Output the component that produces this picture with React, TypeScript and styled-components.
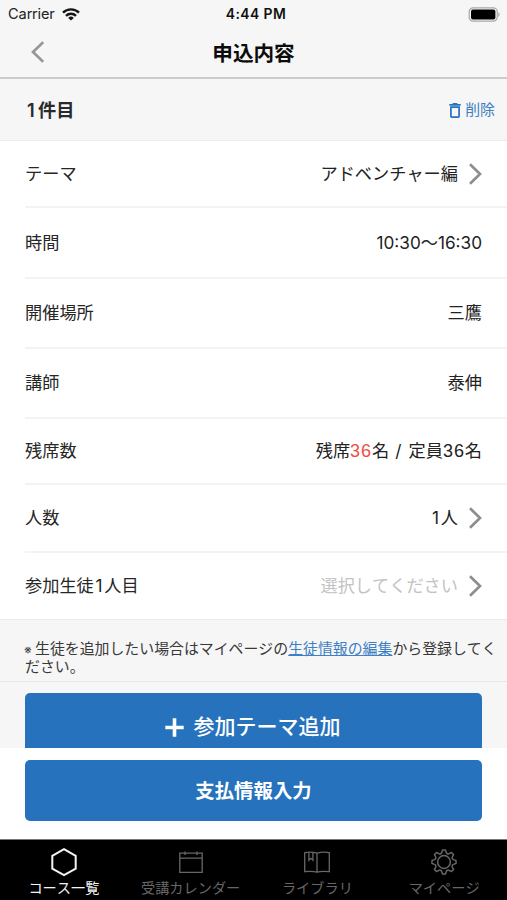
import React from 'react';
import styled, { createGlobalStyle, css } from 'styled-components';

const blue = '#2672bd';
const linkBlue = '#3d80c4';

const GlobalStyle = createGlobalStyle`
  * { box-sizing: border-box; }
  body {
    margin: 0;
    background: #fff;
    color: #222;
    font-family: Inter, "Noto Sans CJK JP", sans-serif;
    font-kerning: none;
    overflow: hidden;
  }
  button { font: inherit; border: 0; padding: 0; background: none; color: inherit; }
`;

const Screen = styled.div`
  width: 507px;
  height: 900px;
  display: flex;
  flex-direction: column;
  overflow: hidden;
  background: #fff;
`;

const StatusBar = styled.div`
  height: 27px;
  flex: none;
  display: grid;
  grid-template-columns: 1fr auto 1fr;
  align-items: center;
  padding: 1px 7px 0 8px;
  background: #f6f6f6;
  font-size: 14px;
  line-height: 26px;
  color: #222;
`;

const Carrier = styled.div`
  display: flex;
  align-items: center;
  gap: 7px;
  font-size: 14.6px;
  letter-spacing: -0.1px;
`;

const Clock = styled.div`
  font-size: 13.9px;
  font-weight: 600;
  letter-spacing: 0.4px;
  color: #111;
  padding-left: 4px;
`;

const BatterySlot = styled.div`
  display: flex;
  justify-content: flex-end;
`;

const NavBar = styled.header`
  height: 52px;
  flex: none;
  display: grid;
  grid-template-columns: 76px 1fr 76px;
  align-items: center;
  background: #f6f6f6;
  border-bottom: 2px solid #cbcbcb;
`;

const BackButton = styled.button`
  display: flex;
  padding-left: 31px;
`;

const Title = styled.h1`
  margin: 0;
  padding-top: 3px;
  text-align: center;
  font-size: 20.6px;
  line-height: 47px;
  font-weight: 700;
  color: #0c0c0c;
`;

const SectionHeader = styled.div`
  height: 62px;
  flex: none;
  display: flex;
  align-items: center;
  justify-content: space-between;
  padding: 0 12px 0 27px;
  background: #f6f6f6;
  border-bottom: 1px solid #ececec;
`;

const SectionTitle = styled.h2`
  margin: 0;
  padding-top: 1px;
  font-size: 18.2px;
  line-height: 26px;
  font-weight: 600;
  color: #2a2a2a;
`;

const SectionNumber = styled.span`
  display: inline-block;
  width: 11px;
`;

const DeleteButton = styled.button`
  display: flex;
  align-items: center;
  gap: 4px;
  padding-top: 1px;
  font-size: 14.9px;
  line-height: 22px;
  color: ${linkBlue};
`;

const Row = styled.div<{ $height: number; $last?: boolean }>`
  height: ${p => p.$height}px;
  flex: none;
  display: flex;
  align-items: center;
  justify-content: space-between;
  margin-left: 25px;
  padding-right: 25px;
  font-size: 17.2px;
  line-height: 24px;
  ${p => !p.$last && css`border-bottom: 2px solid #f3f3f3;`}
`;

const Label = styled.span`
  color: #262626;
`;

const Value = styled.span<{ $muted?: boolean }>`
  display: flex;
  align-items: center;
  gap: 11px;
  white-space: pre;
  color: ${p => (p.$muted ? '#c3c3c3' : '#222')};
`;

const Digits = styled.span<{ $red?: boolean }>`
  font-family: "Liberation Sans", Arial, sans-serif;
  font-size: 18px;
  letter-spacing: 0.9px;
  ${p => p.$red && css`color: #ef5044;`}
`;

const Slash = styled.span`
  letter-spacing: 1.2px;
`;

const One = styled.span`
  display: inline-block;
  width: 10.5px;
  text-align: center;
`;

const Note = styled.p`
  height: 63px;
  flex: none;
  margin: 0;
  padding: 21px 0 0 25px;
  background: #f6f6f6;
  border-top: 1px solid #ebebeb;
  border-bottom: 1px solid #e6e6e6;
  font-size: 14.9px;
  line-height: 17.5px;
  white-space: nowrap;
  color: #383838;
`;

const Mark = styled.span`
  display: inline-block;
  width: 10px;
  font-size: 12px;
  line-height: 10px;
  text-indent: -1px;
`;

const NoteLink = styled.a`
  color: ${linkBlue};
  text-decoration: underline;
  text-decoration-thickness: 1px;
  text-underline-offset: 1px;
`;

const AddArea = styled.div`
  height: 66px;
  flex: none;
  overflow: hidden;
  padding: 11px 25px 0;
  background: #f6f6f6;
`;

const ActionButton = styled.button<{ $size: number; $bold?: boolean }>`
  width: 100%;
  height: ${p => (p.$bold ? 61 : 68)}px;
  display: flex;
  align-items: center;
  justify-content: center;
  gap: 10px;
  padding: ${p => (p.$bold ? '1px 0 0' : '0 2px 0 0')};
  border-radius: 5px;
  background: ${blue};
  color: #fff;
  font-size: ${p => p.$size}px;
  font-weight: ${p => (p.$bold ? 700 : 500)};
  line-height: 30px;
`;

const SubmitArea = styled.div`
  height: 91px;
  flex: none;
  padding: 11.5px 25px 0;
  background: #fff;
`;

const TabBar = styled.nav`
  flex: 1;
  display: grid;
  grid-template-columns: repeat(4, 1fr);
  background: #000;
  border-top: 1px solid #777;
`;

const Tab = styled.button<{ $active?: boolean }>`
  display: flex;
  flex-direction: column;
  align-items: center;
  padding: 7px 0 0 1px;
  color: ${p => (p.$active ? '#f4f4f4' : '#676767')};
  font-size: 14.2px;
  line-height: 22px;
  white-space: nowrap;
`;

const TabIcon = styled.svg`
  width: 32px;
  height: 30px;
  display: block;
  fill: none;
  stroke: currentColor;
`;

const Chevron = ({ left }: { left?: boolean }) => (
  <svg width="13" height="22" viewBox="0 0 13 22" fill="none" stroke={left ? '#969696' : '#8e8e8e'} strokeWidth="2.7">
    <path d={left ? 'M12.2 1.2 2 11l10.2 9.8' : 'M1 1.2 11 11 1 20.8'} />
  </svg>
);

const Wifi = () => (
  <svg width="18" height="13" viewBox="0 0 18 13" fill="none" stroke="#161616" strokeWidth="2.4">
    <path d="M1 4.7a11.3 11.3 0 0 1 16 0" />
    <path d="M4 7.8a7 7 0 0 1 10 0" />
    <path d="M9 12.6 6.2 9.9a4 4 0 0 1 5.6 0Z" fill="#161616" stroke="none" />
  </svg>
);

const Battery = () => (
  <svg width="32" height="15" viewBox="0 0 32 15" fill="none">
    <rect x="1.2" y=".8" width="28" height="13.4" rx="4" stroke="#a8a8a8" strokeWidth="1.2" />
    <rect x="3" y="2.6" width="24.4" height="9.8" rx="2" fill="#000" />
    <path d="M30.3 5.2c1.7.6 1.7 4 0 4.6Z" fill="#a8a8a8" />
  </svg>
);

const Trash = () => (
  <svg width="12" height="15" viewBox="0 0 12 15" fill="none" stroke={blue} strokeWidth="1.7">
    <path d="M.3 1.9h11.4M3.7.9h4.6M1.9 4.2h8.2v9c0 .6-.3.9-.9.9H2.8c-.6 0-.9-.3-.9-.9Z" />
  </svg>
);

const Plus = () => (
  <svg width="19" height="19" viewBox="0 0 19 19" stroke="#fff" strokeWidth="3.6">
    <path d="M9.5.3v18.4M.3 9.5h18.4" />
  </svg>
);

const polar = (r: number, deg: number) => {
  const a = (deg * Math.PI) / 180;
  return `${(16 + r * Math.cos(a)).toFixed(2)} ${(15 + r * Math.sin(a)).toFixed(2)}`;
};

const gearPath =
  Array.from({ length: 8 }, (_, i) => {
    const c = i * 45;
    return `${i ? 'L' : 'M'}${polar(12.1, c - 7)}L${polar(12.1, c + 7)}L${polar(10.2, c + 12)}C${polar(8.6, c + 17)} ${polar(8.6, c + 28)} ${polar(10.2, c + 33)}`;
  }).join('') + 'Z';

const CourseIcon = () => (
  <TabIcon viewBox="0 0 32 30" strokeWidth="2">
    <path d="M16 2.2 27.7 8.8v12.8L16 28.2 4.3 21.6V8.8Z" />
  </TabIcon>
);

const CalendarIcon = () => (
  <TabIcon viewBox="0 0 32 30" strokeWidth="1.3">
    <path d="M4.8 6.2h22.4v19.2H4.8ZM4.8 11.1h22.4M10 4.4v3.6M22 4.4v3.6" />
  </TabIcon>
);

const LibraryIcon = () => (
  <TabIcon viewBox="0 0 32 30" strokeWidth="1.3">
    <path d="M16 6.2C12.5 5.1 7.5 5 3.7 5.7v19c3.8-.5 8.8-.5 12.3.5 3.5-1 8.5-1 12.3-.5v-19C24.5 5 19.5 5.1 16 6.2ZM16 6.2v19M7.9 5.3v8l2-2 2 2V5.3" />
  </TabIcon>
);

const GearIcon = () => (
  <TabIcon viewBox="0 0 32 30" strokeWidth="1.5" strokeLinejoin="round">
    <path d={gearPath} />
    <circle cx="16" cy="15" r="6.4" />
  </TabIcon>
);

export default function App() {
  return (
    <>
      <GlobalStyle />
      <Screen>
        <StatusBar>
          <Carrier>Carrier<Wifi /></Carrier>
          <Clock>4:44 PM</Clock>
          <BatterySlot><Battery /></BatterySlot>
        </StatusBar>
        <NavBar>
          <BackButton aria-label="戻る"><Chevron left /></BackButton>
          <Title>申込内容</Title>
        </NavBar>
        <SectionHeader>
          <SectionTitle><SectionNumber>1</SectionNumber>件目</SectionTitle>
          <DeleteButton><Trash />削除</DeleteButton>
        </SectionHeader>
        <Row $height={67}><Label>テーマ</Label><Value>アドベンチャー編<Chevron /></Value></Row>
        <Row $height={71}><Label>時間</Label><Value>10:30〜16:30</Value></Row>
        <Row $height={70}><Label>開催場所</Label><Value>三鷹</Value></Row>
        <Row $height={70}><Label>講師</Label><Value>泰伸</Value></Row>
        <Row $height={66}>
          <Label>残席数</Label>
          <Value><span>残席<Digits $red>36</Digits>名<Slash> / </Slash>定員<Digits>36</Digits>名</span></Value>
        </Row>
        <Row $height={68}><Label>人数</Label><Value><span><One>1</One>人</span><Chevron /></Value></Row>
        <Row $height={66} $last>
          <Label>参加生徒<One>1</One>人目</Label>
          <Value $muted>選択してください<Chevron /></Value>
        </Row>
        <Note>
          <Mark>※</Mark>生徒を追加したい場合はマイページの<NoteLink>生徒情報の編集</NoteLink>から登録してく<br />ださい。
        </Note>
        <AddArea>
          <ActionButton $size={21}><Plus />参加テーマ追加</ActionButton>
        </AddArea>
        <SubmitArea>
          <ActionButton $size={19.4} $bold>支払情報入力</ActionButton>
        </SubmitArea>
        <TabBar>
          <Tab $active><CourseIcon />コース一覧</Tab>
          <Tab><CalendarIcon />受講カレンダー</Tab>
          <Tab><LibraryIcon />ライブラリ</Tab>
          <Tab><GearIcon />マイページ</Tab>
        </TabBar>
      </Screen>
    </>
  );
}
